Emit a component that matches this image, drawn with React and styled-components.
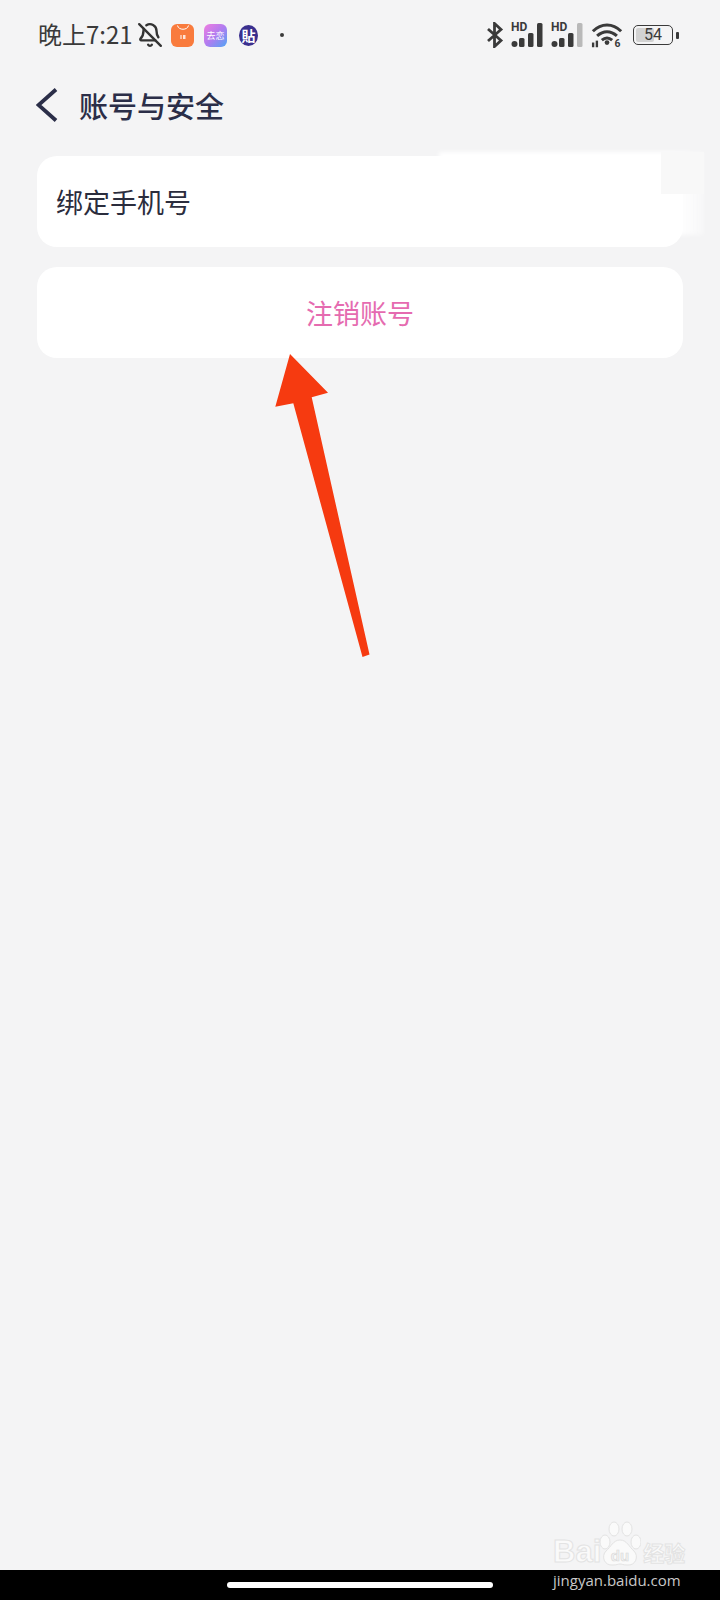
import React from 'react';
import styled, { createGlobalStyle } from 'styled-components';
import { BellOff } from 'lucide-react';

const GlobalStyle = createGlobalStyle`
  html, body {
    margin: 0;
    padding: 0;
    background: #f4f4f5;
  }
  * {
    box-sizing: border-box;
  }
`;

const Signal = ({ last }) => (
  <svg width="33" height="30" viewBox="0 0 33 30">
    <text x="0" y="11" fontFamily="Roboto, sans-serif" fontWeight="700" fontSize="12" fill="#3a3a3a">HD</text>
    <circle cx="3.500" cy="24" r="3" fill="#3a3a3a" />
    <rect x="8" y="18" width="5.500" height="9" rx="1.500" fill="#3a3a3a" />
    <rect x="17" y="13" width="5.500" height="14" rx="1.500" fill="#3a3a3a" />
    <rect x="26" y="3" width="5.500" height="24" rx="1.500" fill={last} />
  </svg>
);

const App = () => {
  return (
    <>
      <GlobalStyle />
      <Page>
        <StatusBar>
          <StatusLeft>
            <Clock>晚上7:21</Clock>
            <BellOff size={26} color="#333" strokeWidth={2.2} />
            <AppTile $bg="#f97b3d" $first>
              <svg width="22" height="22" viewBox="0 0 22 22">
                <path d="M5.500 1.500c1 5 10 5 11 0" fill="none" stroke="#fff" strokeWidth="1" />
                <rect x="8.500" y="11" width="1" height="4" fill="#fff" />
                <rect x="11" y="11" width="2.500" height="4" fill="#fff" opacity="0.8" />
              </svg>
            </AppTile>
            <AppTile $bg="linear-gradient(135deg, #f07de0 0%, #b07cf0 50%, #4fa5f5 100%)">
              <TileLabel>去恋</TileLabel>
            </AppTile>
            <RoundApp>
              <RoundLabel>貼</RoundLabel>
            </RoundApp>
            <Dot />
          </StatusLeft>
          <StatusRight>
            <svg width="18" height="26" viewBox="0 0 18 26">
              <path d="M2 7l13 11.500L8.500 24.500V1.500L15 7.500 2 19" fill="none" stroke="#3a3a3a" strokeWidth="2.800" />
            </svg>
            <Signal last="#3a3a3a" />
            <Signal last="#b9b9b9" />
            <svg width="32" height="28" viewBox="0 0 34 28">
              <path d="M2 10c9-9 21-9 30 0M6.500 15c6.500-6 14.500-6 21 0M11.500 19.500c3.500-3 7.500-3 11 0" fill="none" stroke="#3a3a3a" strokeWidth="3.200" />
              <circle cx="17" cy="22" r="2.500" fill="#3a3a3a" />
              <rect x="1" y="22" width="2.500" height="5" fill="#3a3a3a" />
              <rect x="5" y="20" width="2.500" height="7" fill="#3a3a3a" />
              <text x="25" y="27" fontFamily="Roboto, sans-serif" fontWeight="700" fontSize="11" fill="#3a3a3a">6</text>
            </svg>
            <Battery>
              <BatteryBody>
                <BatteryLevel />
                <BatteryText>54</BatteryText>
              </BatteryBody>
              <BatteryNub />
            </Battery>
          </StatusRight>
        </StatusBar>

        <NavBar>
          <svg width="22" height="36" viewBox="0 0 22 36">
            <path d="M20 2.500L2.500 18 20 33.500" fill="none" stroke="#2b2e48" strokeWidth="3.800" />
          </svg>
          <Title>账号与安全</Title>
        </NavBar>

        <Content>
          <Card>
            <CardText>绑定手机号</CardText>
          </Card>
          <Card $center>
            <DangerText>注销账号</DangerText>
          </Card>
        </Content>

        <Smudge />
        <SmudgeCorner />

        <Arrow width="110" height="310" viewBox="0 0 110 310">
          <path
            d="M20 4L5.300 56.700 23.300 53.300 92.500 307 99.500 304.500 41.700 47.300 58 42.700Z"
            fill="#f63a10"
          />
        </Arrow>

        <BottomBar>
          <HomeIndicator />
          <WatermarkUrl>jingyan.baidu.com</WatermarkUrl>
        </BottomBar>

        <Watermark>
          <WatermarkWord>Bai</WatermarkWord>
          <Paw width="42" height="52" viewBox="0 0 42 52">
            <g fill="#fafafa" stroke="#e3e3e3" strokeWidth="1">
              <ellipse cx="6" cy="22" rx="5" ry="7" />
              <ellipse cx="15" cy="9" rx="5" ry="7" />
              <ellipse cx="28" cy="9" rx="5" ry="7" />
              <ellipse cx="37" cy="22" rx="5" ry="7" />
              <path d="M21 20c7 0 9 7 14 11 5 5 2 15-7 14-4 0-5-1-7-1s-3 1-7 1c-9 1-12-9-7-14 5-4 7-11 14-11z" />
            </g>
            <PawText x="21" y="41" textAnchor="middle">du</PawText>
          </Paw>
          <WatermarkCn>经验</WatermarkCn>
        </Watermark>
      </Page>
    </>
  );
};

export default App;

const cjk = `"Noto Sans CJK SC", "Noto Sans", sans-serif`;

const Page = styled.div`
  position: relative;
  display: flex;
  flex-direction: column;
  width: 720px;
  height: 1600px;
  overflow: hidden;
  background: #f4f4f5;
  font-family: ${cjk};
`;

const StatusBar = styled.div`
  display: flex;
  align-items: center;
  justify-content: space-between;
  height: 70px;
  padding: 0 41px 0 38px;
`;

const StatusLeft = styled.div`
  display: flex;
  align-items: center;
`;

const StatusRight = styled.div`
  display: flex;
  align-items: center;
  gap: 7px;
`;

const Clock = styled.span`
  width: 99px;
  margin-bottom: 4px;
  font-size: 24px;
  white-space: nowrap;
  color: #3a3a3a;
`;

const AppTile = styled.div`
  display: flex;
  align-items: center;
  justify-content: center;
  width: 23px;
  height: 23px;
  margin-left: ${(props) => (props.$first ? '8px' : '10px')};
  border-radius: 6px;
  background: ${(props) => props.$bg};
`;

const TileLabel = styled.span`
  font-size: 9px;
  white-space: nowrap;
  color: #fff;
`;

const RoundApp = styled.div`
  display: flex;
  align-items: center;
  justify-content: center;
  width: 19px;
  height: 21px;
  margin-left: 12px;
  border-radius: 50%;
  background: #3a2f8e;
`;

const RoundLabel = styled.span`
  font-size: 14px;
  font-weight: 700;
  line-height: 1;
  color: #fff;
`;

const Dot = styled.div`
  width: 4px;
  height: 4px;
  margin-left: 22px;
  border-radius: 50%;
  background: #3a3a3a;
`;

const Battery = styled.div`
  display: flex;
  align-items: center;
  gap: 3px;
  margin-left: 3px;
`;

const BatteryBody = styled.div`
  position: relative;
  display: flex;
  align-items: center;
  justify-content: center;
  width: 40px;
  height: 20px;
  border: 1.500px solid #3a3a3a;
  border-radius: 5px;
  overflow: hidden;
`;

const BatteryLevel = styled.div`
  position: absolute;
  left: 2px;
  top: 2px;
  bottom: 2px;
  width: 18px;
  border-radius: 2px;
  background: #d2d2d2;
`;

const BatteryText = styled.span`
  position: relative;
  font-family: Roboto, sans-serif;
  font-size: 16px;
  line-height: 1;
  color: #3a3a3a;
`;

const BatteryNub = styled.div`
  width: 3px;
  height: 7px;
  border-radius: 1px;
  background: #3a3a3a;
`;

const NavBar = styled.div`
  display: flex;
  align-items: center;
  gap: 21px;
  height: 70px;
  padding-left: 36px;
`;

const Title = styled.h1`
  margin: 0;
  font-size: 29px;
  font-weight: 500;
  color: #2b2e48;
`;

const Content = styled.div`
  display: flex;
  flex: 1;
  flex-direction: column;
  gap: 20px;
  padding: 16px 37px 0;
`;

const Card = styled.div`
  display: flex;
  align-items: center;
  justify-content: ${(props) => (props.$center ? 'center' : 'flex-start')};
  height: 91px;
  padding: 0 19px;
  border-radius: 20px;
  background: #fff;
`;

const CardText = styled.span`
  font-size: 27px;
  color: #2b2d3d;
`;

const DangerText = styled.span`
  font-size: 27px;
  color: #e56bb0;
`;

const Smudge = styled.div`
  position: absolute;
  left: 439px;
  top: 152px;
  width: 265px;
  height: 83px;
  background: linear-gradient(to right, #fff 90%, rgba(255, 255, 255, 0.3) 100%);
  filter: blur(2px);
`;

const SmudgeCorner = styled.div`
  position: absolute;
  left: 661px;
  top: 152px;
  width: 43px;
  height: 42px;
  background: #f8f8f8;
`;

const Arrow = styled.svg`
  position: absolute;
  left: 270px;
  top: 350px;
`;

const BottomBar = styled.div`
  position: relative;
  height: 30px;
  background: #000;
`;

const HomeIndicator = styled.div`
  position: absolute;
  left: 227px;
  top: 12px;
  width: 266px;
  height: 6px;
  border-radius: 3px;
  background: #fff;
`;

const WatermarkUrl = styled.span`
  position: absolute;
  left: 553px;
  top: 0;
  font-family: "Open Sans", sans-serif;
  font-size: 15px;
  line-height: 20px;
  white-space: nowrap;
  color: #c8c8c8;
`;

const Watermark = styled.div`
  position: absolute;
  left: 553px;
  top: 1522px;
  display: flex;
  align-items: flex-end;
  height: 48px;
  color: #fafafa;
  -webkit-text-stroke: 1px #e3e3e3;
`;

const WatermarkWord = styled.span`
  font-family: "Liberation Sans", sans-serif;
  font-size: 31px;
  font-weight: 700;
  line-height: 36px;
`;

const Paw = styled.svg`
  margin: 0 0 -2px -2px;
`;

const PawText = styled.text`
  font-family: "Liberation Sans", sans-serif;
  font-size: 15px;
  font-weight: 700;
  stroke: #d8d8d8;
  stroke-width: 0.6;
  fill: #f2f2f2;
`;

const WatermarkCn = styled.span`
  margin-left: 2px;
  font-size: 21px;
  font-weight: 700;
  line-height: 36px;
`;
